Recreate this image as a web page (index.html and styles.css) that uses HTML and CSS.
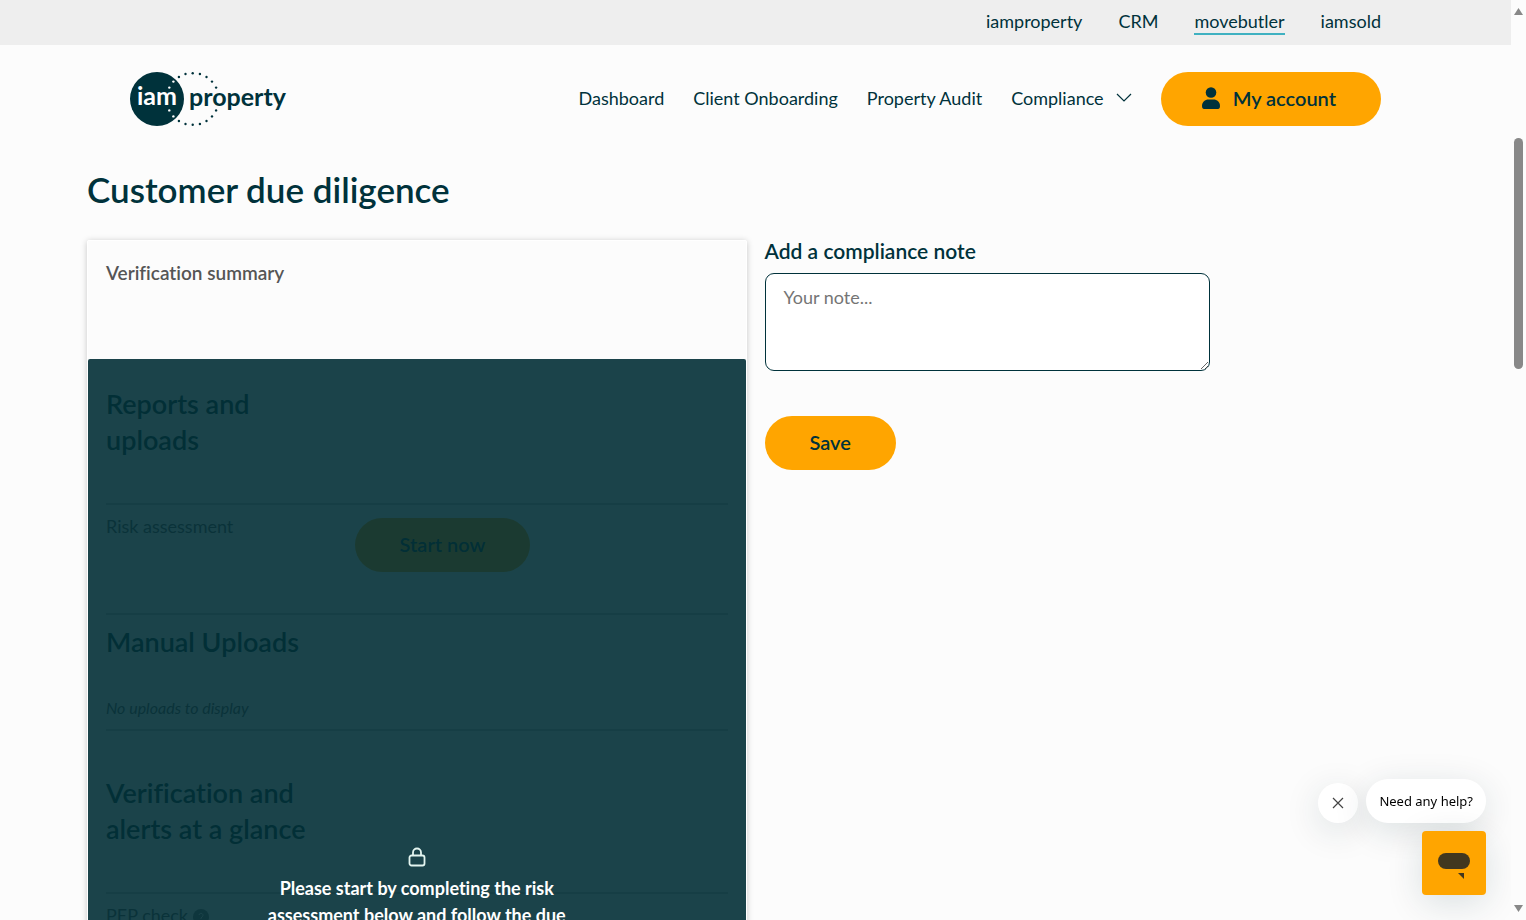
FILE: index.html
```html
<!DOCTYPE html>
<html lang="en">
<head>
    <meta charset="UTF-8">
    <meta name="viewport" content="width=device-width, initial-scale=1.0">
    <title>Customer due diligence</title>
    <link rel="stylesheet" href="styles.css">
</head>
<body>
<div class="topbar">
    <nav class="topbar-inner" aria-label="Sites">
        <a href="#">iamproperty</a>
        <a href="#">CRM</a>
        <a href="#" class="active">movebutler</a>
        <a href="#">iamsold</a>
    </nav>
</div>

<header class="header">
    <a href="#" class="logo" aria-label="iamproperty">
        <svg width="160" height="54" viewBox="0 0 160 54">
            <circle cx="27" cy="27" r="27" fill="#00323b"/>
            <g fill="#00323b">
                <circle cx="48.9" cy="5" r="1.2"/>
                <circle cx="55.5" cy="2" r="1.2"/>
                <circle cx="62.7" cy="1.2" r="1.2"/>
                <circle cx="69.9" cy="2" r="1.2"/>
                <circle cx="76.5" cy="5" r="1.2"/>
                <circle cx="82" cy="9.6" r="1.2"/>
                <circle cx="86.1" cy="15.6" r="1.2"/>
                <circle cx="86.1" cy="38.4" r="1.2"/>
                <circle cx="82" cy="44.4" r="1.2"/>
                <circle cx="76.5" cy="49" r="1.2"/>
                <circle cx="69.9" cy="52" r="1.2"/>
                <circle cx="62.7" cy="52.8" r="1.2"/>
                <circle cx="55.5" cy="52" r="1.2"/>
                <circle cx="48.9" cy="49" r="1.2"/>
            </g>
            <g fill="#fff">
                <circle cx="43.4" cy="9.6" r="1.2"/>
                <circle cx="39.3" cy="15.6" r="1.2"/>
                <circle cx="39.3" cy="38.4" r="1.2"/>
                <circle cx="43.4" cy="44.4" r="1.2"/>
            </g>
            <text x="7" y="33" class="logo-text" fill="#fff">iam</text>
            <text x="59" y="34" class="logo-text" fill="#00323b">property</text>
        </svg>
    </a>
    <nav class="main-nav" aria-label="Main">
        <a href="#">Dashboard</a>
        <a href="#">Client Onboarding</a>
        <a href="#">Property Audit</a>
        <a href="#" class="has-menu">Compliance
            <svg width="16" height="10" viewBox="0 0 16 10" fill="none" stroke="#00323b" stroke-width="1.2"><path d="M1 1l7 7 7-7"/></svg>
        </a>
        <button type="button" class="btn">
            <svg width="20" height="22" viewBox="0 0 20 22" fill="#00323b"><circle cx="10" cy="5.5" r="5.3"/><path d="M1 19c0-4 3-6.500 6.500-6.500h5c3.500 0 6.500 2.500 6.500 6.500 0 2-.8 3-2 3H3c-1.200 0-2-1-2-3z"/></svg>
            My account
        </button>
    </nav>
</header>

<main class="page">
    <h1>Customer due diligence</h1>
    <div class="columns">
        <section class="card">
            <div class="card-top">
                <h2>Verification summary</h2>
            </div>
            <div class="locked">
                <div class="block">
                    <h3>Reports and uploads</h3>
                </div>
                <div class="row">
                    <span>Risk assessment</span>
                    <button type="button" class="btn">Start now</button>
                </div>
                <div class="uploads">
                    <h3>Manual Uploads</h3>
                    <p>No uploads to display</p>
                </div>
                <div class="block block-line">
                    <h3>Verification and alerts at a glance</h3>
                </div>
                <div class="row">
                    <span>PEP check
                        <svg width="16" height="16" viewBox="0 0 16 16"><circle cx="8" cy="8" r="8" fill="#777"/><path d="M6 6a2 2 0 1 1 3 2l-1 1v1M8 11v2" stroke="#fff" fill="none"/></svg>
                    </span>
                </div>
                <div class="overlay">
                    <svg width="18" height="20" viewBox="0 0 18 20" fill="none" stroke="#e4f5f0" stroke-width="1.8"><rect x="1.5" y="8.5" width="15" height="10" rx="2"/><path d="M5 8.500V5.500a4 4 0 0 1 8 0v3"/></svg>
                    <p>Please start by completing the risk assessment below and follow the due</p>
                </div>
            </div>
        </section>

        <form class="note">
            <label for="note">Add a compliance note</label>
            <textarea id="note" name="note" placeholder="Your note..."></textarea>
            <button type="button" class="btn">Save</button>
        </form>
    </div>
</main>

<div class="chat">
    <div class="chat-hint">
        <button type="button" class="chat-close" aria-label="Close">
            <svg width="12" height="12" viewBox="0 0 12 12" stroke="#444" stroke-width="1.2"><path d="M1 1l10 10M11 1L1 11"/></svg>
        </button>
        <button type="button" class="chat-text">Need any help?</button>
    </div>
    <button type="button" class="chat-open" aria-label="Open chat">
        <svg width="32" height="26" viewBox="0 0 32 26" fill="#41371f"><rect width="32" height="16" rx="8"/><path d="M20 20h6v6z"/></svg>
    </button>
</div>

<div class="scrollbar">
    <svg width="9" height="7" viewBox="0 0 9 7" fill="#888"><path d="M4.5 0L9 7H0z"/></svg>
    <div class="thumb"></div>
    <svg width="9" height="7" viewBox="0 0 9 7" fill="#888"><path d="M0 0h9L4.5 7z"/></svg>
</div>
</body>
</html>
```
FILE: styles.css
```css
* {
    box-sizing: border-box;
}

body {
    margin: 0;
    padding-right: 15px;
    height: 100vh;
    overflow: hidden;
    background-color: #fcfcfc;
    color: #00323b;
    font-family: Lato, "Liberation Sans", sans-serif;
    font-size: 18px;
    line-height: 27px;
    font-variant-ligatures: none;
}

a {
    color: inherit;
    text-decoration: none;
}

h1, h2, h3, p {
    margin: 0;
    font-weight: 600;
}

svg {
    flex: none;
}

.topbar {
    background-color: #eee;
}

.topbar-inner,
.header {
    display: flex;
    align-items: center;
    max-width: 1251px;
    margin: 0 auto;
}

.topbar-inner {
    justify-content: flex-end;
    gap: 36px;
    height: 45px;
    padding-bottom: 2px;
}

.topbar-inner a {
    line-height: 24px;
    border-bottom: 2px solid transparent;
}

.topbar-inner .active {
    border-color: #3fb1c1;
}

.header {
    justify-content: space-between;
    padding: 27px 0;
}

.logo {
    display: flex;
}

.logo-text {
    font-size: 25px;
    font-weight: 700;
}

.main-nav {
    display: flex;
    align-items: center;
    gap: 29px;
}

.main-nav a {
    padding-bottom: 2px;
}

.has-menu {
    display: flex;
    align-items: center;
    gap: 12px;
}

.btn {
    display: inline-flex;
    align-items: center;
    justify-content: center;
    gap: 12px;
    height: 54px;
    padding: 0 45px 2px;
    border: 0;
    border-radius: 27px;
    background-color: #ffa500;
    color: #00323b;
    font-family: inherit;
    font-size: 20px;
    font-weight: 600;
}

.main-nav .btn {
    padding: 0 45px 2px 40px;
}

.page {
    max-width: 1337px;
    margin: 0 auto;
}

h1 {
    padding: 11px 0 26px;
    font-size: 35px;
    line-height: 50px;
}

.columns {
    display: grid;
    grid-template-columns: 1fr 1fr;
    gap: 18px;
    align-items: start;
}

.card {
    border: 1px solid #fff;
    border-radius: 2px;
    box-shadow: 0 1px 6px rgba(0, 0, 0, 0.22);
}

.card-top {
    height: 118px;
    padding: 18px;
}

h2 {
    color: #555;
    font-size: 19px;
    line-height: 27px;
}

.locked {
    position: relative;
    padding: 0 18px;
}

h3 {
    font-size: 27px;
    line-height: 36px;
}

.block {
    padding: 27px 0 45px;
}

.block h3 {
    max-width: 230px;
}

.block-line {
    padding-top: 44px;
}

.row {
    display: grid;
    grid-template-columns: 2fr 3fr;
    align-items: start;
    justify-items: start;
    height: 110px;
    padding-top: 8px;
    border-top: 2px solid #ccc;
    color: #555;
}

.row .btn {
    margin-top: 5px;
}

.row svg {
    vertical-align: middle;
}

.uploads {
    padding: 9px 0;
    border-top: 2px solid #ccc;
    border-bottom: 2px solid #ccc;
}

.uploads p {
    padding-top: 36px;
    color: #555;
    font-size: 16px;
    font-style: italic;
    font-weight: 400;
    line-height: 24px;
}

/* covers the locked part of the card */
.overlay {
    position: absolute;
    inset: 0;
    display: flex;
    flex-direction: column;
    align-items: center;
    gap: 8px;
    padding-top: 488px;
    border-radius: 2px;
    background-color: rgba(2, 47, 54, 0.9);
    color: #fff;
    text-align: center;
}

.overlay p {
    max-width: 320px;
    font-weight: 700;
}

.note {
    display: flex;
    flex-direction: column;
    align-items: flex-start;
}

.note label {
    font-size: 21px;
    font-weight: 600;
    line-height: 22px;
}

.note textarea {
    width: 67.5%;
    height: 98px;
    margin: 11px 0 45px;
    padding: 10px 18px;
    border: 1px solid #00323b;
    border-radius: 9px;
    background-color: #fff;
    font: inherit;
}

.note textarea::placeholder {
    color: #757575;
}

.chat {
    position: fixed;
    right: 40px;
    bottom: 25px;
    display: flex;
    flex-direction: column;
    align-items: flex-end;
    gap: 8px;
}

.chat-hint {
    display: flex;
    align-items: flex-end;
    gap: 8px;
}

.chat button {
    display: flex;
    align-items: center;
    justify-content: center;
    padding: 0;
    border: 0;
    background-color: #fff;
    box-shadow: 0 8px 36px rgba(0, 50, 60, 0.14);
}

.chat .chat-close {
    width: 40px;
    height: 40px;
    border-radius: 20px;
}

.chat .chat-text {
    height: 44px;
    padding: 0 13px;
    border-radius: 22px;
    color: #000;
    font-family: "Noto Sans", sans-serif;
    font-size: 13px;
}

.chat .chat-open {
    width: 64px;
    height: 64px;
    padding-top: 6px;
    border-radius: 4px;
    background-color: #ffa500;
}

.scrollbar {
    position: fixed;
    top: 0;
    right: 0;
    bottom: 0;
    display: flex;
    flex-direction: column;
    align-items: center;
    width: 15px;
    padding: 8px 0;
    background-color: #fcfcfc;
}

.thumb {
    width: 9px;
    height: 231px;
    margin: 123px 0 auto;
    border-radius: 5px;
    background-color: #888;
}
```
